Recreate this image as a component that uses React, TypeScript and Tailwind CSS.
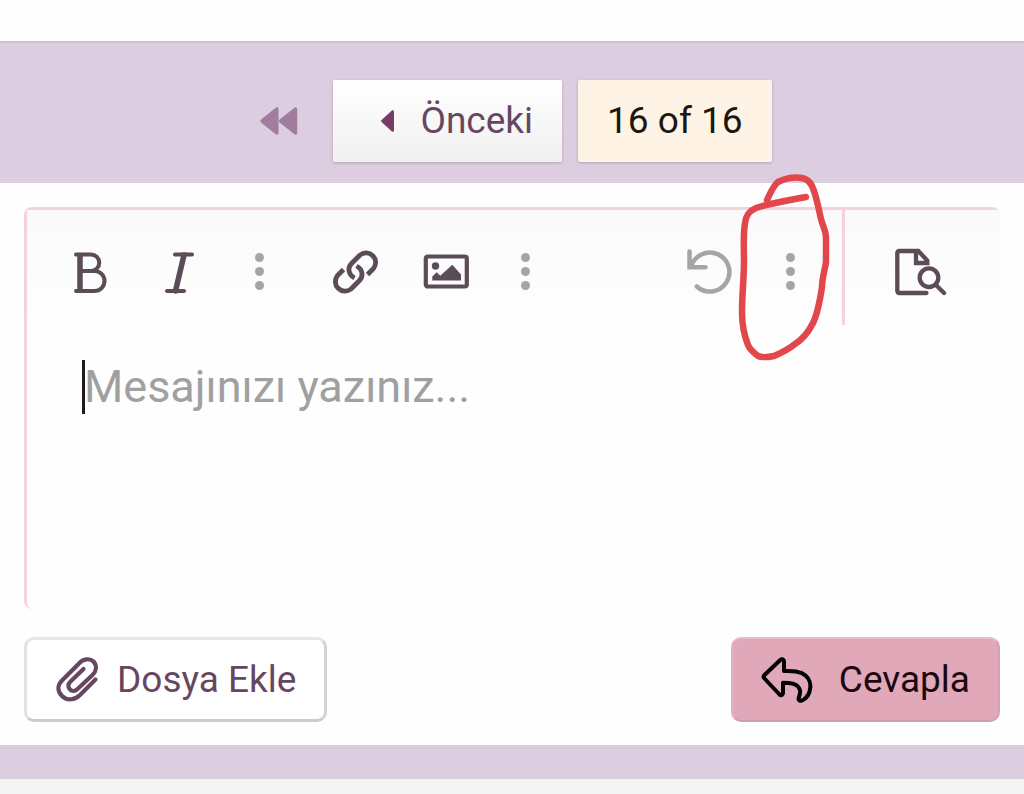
import type { ReactNode } from "react";

function ToolButton({ label, children }: { label: string; children: ReactNode }) {
    return (
        <button type="button" aria-label={label} className="flex h-full w-[90px] shrink-0 items-center justify-center">
            {children}
        </button>
    );
}

function MoreButton({ label }: { label: string }) {
    return (
        <button
            type="button"
            aria-label={label}
            className="flex h-full w-[68px] shrink-0 flex-col items-center justify-center gap-[5px]"
        >
            <span className="size-[9px] rounded-full bg-[#a5a5a5]" />
            <span className="size-[9px] rounded-full bg-[#a5a5a5]" />
            <span className="size-[9px] rounded-full bg-[#a5a5a5]" />
        </button>
    );
}

const stroke = {
    fill: "none",
    stroke: "currentColor",
    strokeLinecap: "round",
    strokeLinejoin: "round",
} as const;

function PageNav() {
    return (
        <nav className="flex h-[142px] items-center justify-center gap-4 border-t-2 border-[#cbc1cf] bg-[#dccde0] pt-4 text-[37px]">
            <button type="button" aria-label="İlk" className="flex h-[82px] w-[65px] items-center pl-2 text-[#a07d9d]">
                <svg viewBox="0 0 38 28" className="h-7 w-[38px]" fill="currentColor" aria-hidden="true">
                    <path d="M1 12.6 15.8.8c1.2-1 2.7-.3 2.7 1.2v24c0 1.5-1.5 2.2-2.7 1.2L1 15.4c-.9-.8-.9-2 0-2.8z" />
                    <path d="M19.5 12.6 34.5.8c1.2-1 2.7-.3 2.7 1.2v24c0 1.5-1.5 2.2-2.7 1.2L19.5 15.4c-.9-.8-.9-2 0-2.8z" />
                </svg>
            </button>
            <button
                type="button"
                className="flex h-[82px] items-center gap-[26px] rounded-xs bg-linear-to-b from-white to-[#f0f0f0] pr-[29px] pl-12 text-[#67475f] shadow-[0_1px_3px_#00000033]"
            >
                <svg viewBox="0 0 13 22" className="h-[22px] w-[13px] text-[#783c68]" fill="currentColor" aria-hidden="true">
                    <path d="M.6 9.9 10.6.7C11.7-.2 13 .3 13 1.8v18.4c0 1.5-1.3 2-2.4 1.1L.6 12.1c-.8-.7-.8-1.5 0-2.2z" />
                </svg>
                Önceki
            </button>
            <span className="flex h-[82px] items-center rounded-xs bg-[#fff3e6] px-[29px] text-[#1d1712] shadow-[0_1px_3px_#00000033]">
                16 of 16
            </span>
        </nav>
    );
}

function Toolbar() {
    return (
        <div className="flex h-[115px] bg-linear-to-b from-[#f9faf9] to-[#fefefe] text-[#5b4c58]">
            <div role="toolbar" aria-label="Biçim" className="flex flex-1 items-center px-[18px] pt-2">
                <ToolButton label="Kalın">
                    <svg viewBox="0 0 48 48" className="size-12" strokeWidth="4" {...stroke}>
                        <path d="M10 6.5H25a8.200 8.200 0 0 1 0 16.500H16M25 23h3.500a10 10 0 0 1 0 20H10" />
                        <path d="M14 7v36" strokeWidth="5.5" strokeLinecap="butt" />
                    </svg>
                </ToolButton>
                <ToolButton label="Yatık">
                    <svg viewBox="0 0 48 48" className="size-12" strokeWidth="4" {...stroke}>
                        <path d="M19 6.5h17M11 43h17" />
                        <path d="M28 7 19.5 43" strokeWidth="5.5" />
                    </svg>
                </ToolButton>
                <MoreButton label="Diğer biçimler" />
                <div className="ml-[18px] flex h-full items-center">
                    <ToolButton label="Bağlantı">
                        <svg viewBox="0 0 48 48" className="size-12" strokeWidth="4.8" {...stroke} strokeLinecap="butt">
                            <path d="m35.5 26.5 6-6A9.6 9.6 0 0 0 28 7l-8.5 8.5c-4 4-3.5 11 3 14.5" />
                            <path d="m11.5 21.5-6 6A9.6 9.6 0 0 0 19 41l8.5-8.5c4-4 3.5-11-3-14.5" />
                        </svg>
                    </ToolButton>
                    <ToolButton label="Resim">
                        <svg viewBox="0 0 48 48" className="size-12" aria-hidden="true">
                            <rect x="3.8" y="8.5" width="41" height="30" rx="2" strokeWidth="4.2" {...stroke} />
                            <circle cx="13.500" cy="18" r="3.7" fill="currentColor" />
                            <path d="M10.3 32.500v-4l4.4-4.300 3.6 3.600 12-11L39 26.500v6z" fill="currentColor" />
                        </svg>
                    </ToolButton>
                    <MoreButton label="Diğer eklemeler" />
                </div>
                <div className="ml-auto flex h-full items-center">
                    <button
                        type="button"
                        aria-label="Geri al"
                        className="flex h-full w-[90px] items-center justify-center text-[#a5a5a5]"
                    >
                        <svg viewBox="0 0 48 48" className="size-12" strokeWidth="4.5" {...stroke}>
                            <path d="M2.5 3.5v15.8h16" strokeLinejoin="miter" />
                            <path d="M4.2 18.5A19.5 19.5 0 1 1 9.8 38.5" />
                        </svg>
                    </button>
                    <div className="relative h-full">
                        <MoreButton label="Diğer seçenekler" />
                        {/* hand-drawn marker ring */}
                        <svg
                            viewBox="735 170 100 195"
                            className="pointer-events-none absolute -top-12 -left-[22px] h-[195px] w-[100px] max-w-none text-[#e2474b]"
                            strokeWidth="6.5"
                            {...stroke}
                        >
                            <path d="M768 200c4-8 6-14 11-18 8-4 17-5 24-4 5 1 8 4 10 8 4 8 6 20 9 33 2 8 5 12 5 19v24c-1 8-4 16-4 25-2 13-4 26-9 36-4 8-10 16-18 21-6 5-14 9-21 12-5 1-12 2-16 0-4-3-8-6-10-11-4-10-6-22-6-33 0-18 2-34 2-51 0-13-1-26 1-38 1-8 4-12 11-15 11-4 24-6 50-11" />
                        </svg>
                    </div>
                </div>
            </div>
            <button
                type="button"
                aria-label="Önizleme"
                className="flex w-[158px] items-center justify-center border-l-3 border-[#f5d2db] pt-2 pr-1"
            >
                <svg viewBox="0 0 52 48" className="h-12 w-[52px]" strokeWidth="4.3" {...stroke}>
                    <path d="M31.5 45H4.3a2 2 0 0 1-2-2V5a2 2 0 0 1 2-2h19l9 9.500V15H21V4" strokeLinejoin="miter" />
                    <circle cx="34" cy="29.7" r="9.3" />
                    <path d="m41 37 8 8" />
                </svg>
            </button>
        </div>
    );
}

export default function App() {
    return (
        <div className="flex min-h-screen flex-col bg-[#f4f4f4] font-[Roboto,sans-serif]">
            <div className="h-[41px] bg-[#fefefe]" />
            <PageNav />
            <main className="border-b-4 border-[#d5cdd7] bg-[#fefefe] px-6 pt-6 pb-[23px]">
                <div className="h-[402px] rounded-lg border-t-3 border-l-3 border-[#f5d2db]">
                    <Toolbar />
                    <div className="relative">
                        <textarea
                            aria-label="Mesaj"
                            placeholder="Mesajınızı yazınız..."
                            className="block h-[280px] w-full resize-none bg-transparent pt-[35px] pl-[57px] text-[45px] leading-[54px] outline-none placeholder:text-[#a0a0a0]"
                        />
                        <span className="absolute top-[35px] left-[55px] h-[54px] w-[3px] bg-[#1c1c1c]" />
                    </div>
                </div>
                <div className="mt-7 flex justify-between text-[37px]">
                    <button
                        type="button"
                        className="flex h-[85px] items-center gap-4 rounded-[10px] border-3 border-t-[#e6e6e6] border-r-[#d2d2d2] border-b-[#cccccc] border-l-[#e2e2e2] bg-white px-7 text-[#67475f]"
                    >
                        <svg viewBox="0 0 46 48" className="h-12 w-[46px]" strokeWidth="4.2" {...stroke}>
                            <path d="M40.5 23.5 25 39C20 44 12 45 7 40c-5.500-5.500-4-11.500 0-15.500L24 7.500c4-5 11-5.500 14.500-2 4 4.500 2.500 10-1 13.500l-15 14c-3 3-6 2-7.500.5-2.500-2.500-2-5.500.5-8l13-12.500" />
                        </svg>
                        Dosya Ekle
                    </button>
                    <button
                        type="button"
                        className="flex h-[85px] items-center gap-[26px] rounded-[10px] border-2 border-t-[#e8bccb] border-r-[#d3a3b2] border-b-[#cd9fae] border-l-[#e3b0c0] bg-[#e0a8b9] px-7 text-[#1c070f]"
                    >
                        <svg viewBox="0 0 52 48" className="h-12 w-[52px] text-black" strokeWidth="4" {...stroke}>
                            <path d="M3.5 19 19 4.200c2-1.800 4-.8 4 1.300v9.500c7-.3 13 0 18 2.200 6 3 8.800 8 8.300 14.300-.5 6-4 11-8.300 13-2 1-4-.5-3.300-2.500 2-6 2-8.500-.7-11.500-3-3.500-8.500-3.800-15-3.800V37c0 2-2 3-3.500 1.500L3.500 22.500c-1.200-1.200-1.200-2.300 0-3.500z" />
                        </svg>
                        Cevapla
                    </button>
                </div>
            </main>
            <div className="h-[30px] border-b-2 border-[#d8d0da] bg-[#dccde0]" />
        </div>
    );
}
